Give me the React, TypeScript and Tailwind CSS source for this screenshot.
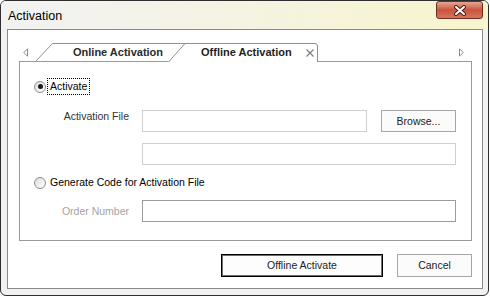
import React from "react";

const font = { fontFamily: '"Liberation Sans", Arial, sans-serif' };

function Radio({ checked }: { checked?: boolean }) {
  return (
    <div className="w-[12px] h-[12px] rounded-full border border-[#8e8f8f] bg-gradient-to-br from-[#dcdcdc] to-[#ffffff] flex items-center justify-center shrink-0">
      {checked && <div className="w-[5px] h-[5px] rounded-full bg-[#1a1a1a]" />}
    </div>
  );
}

function Field({ w, dark }: { w: string; dark?: boolean }) {
  return (
    <div
      className={`${w} h-[22px] bg-white border ${dark ? "border-[#9c9c9c]" : "border-[#cfcfcf]"}`}
    />
  );
}

export default function App() {
  return (
    <div className="w-[490px] h-[296px] bg-white" style={font}>
      <div className="w-[489px] h-[296px] border border-[#2e2e2e] rounded-[6px] bg-[#f1f1f1] flex flex-col overflow-hidden">
        {/* Title bar */}
        <div className="h-[28px] shrink-0 flex items-start justify-between bg-gradient-to-r from-[#f2f2f2] via-[#f5f3e2] to-[#f8f5cc]">
          <div className="pl-[7px] pt-[8px] text-[12.5px] leading-[15px] text-black">Activation</div>
          <div className="mr-[5px] w-[47px] h-[18px] rounded-[3px] border border-[#6b2f24] bg-gradient-to-b from-[#e7a595] via-[#c9533c] to-[#d8745a] flex items-center justify-center">
            <svg width="14" height="11" viewBox="0 0 14 11">
              <path d="M3 2 L11 9 M11 2 L3 9" stroke="#4a2018" strokeWidth="4" strokeLinecap="round" />
              <path d="M3 2 L11 9 M11 2 L3 9" stroke="#ffffff" strokeWidth="2" strokeLinecap="round" />
            </svg>
          </div>
        </div>

        {/* Client area */}
        <div className="ml-[6px] mr-[5px] h-[260px] bg-white border border-[#8a8a8a] pl-[11px] pt-[13px]">
          <div className="w-[453px]">
            {/* Tab strip */}
            <div className="flex h-[19px]">
              <div className="w-[16px] h-[19px] border-b border-[#9a9a9a] flex items-center pl-[4px]">
                <svg width="6" height="9" viewBox="0 0 6 9">
                  <path d="M4.5 0.8 L0.8 4.5 L4.5 8.2 Z" fill="none" stroke="#8a8a8a" strokeWidth="1" />
                </svg>
              </div>
              <div className="relative w-[150px] h-[19px] flex items-center pl-[38px]">
                <svg className="absolute inset-0" width="150" height="19" viewBox="0 0 150 19">
                  <path d="M0 19 L17.5 0.5 L150 0.5 L150 19 Z" fill="#ffffff" />
                  <path d="M0.5 18.5 L17.5 0.5 L150 0.5" fill="none" stroke="#8f8f8f" strokeWidth="1" />
                  <path d="M0 18.5 L150 18.5" stroke="#9a9a9a" strokeWidth="1" />
                </svg>
                <span className="relative text-[11px] font-bold text-[#2b2b2b] leading-[13px]">Online Activation</span>
              </div>
              <div className="relative -ml-[17px] w-[150px] h-[19px] flex items-center pl-[33px]">
                <svg className="absolute inset-0" width="150" height="19" viewBox="0 0 150 19">
                  <path d="M0 19 L17 0.5 L147 0.5 Q149.5 0.5 149.5 3 L149.5 19 Z" fill="#ffffff" />
                  <path d="M0.5 19 L17 0.5 L147 0.5 Q149.5 0.5 149.5 3 L149.5 19" fill="none" stroke="#8f8f8f" strokeWidth="1" />
                </svg>
                <span className="relative text-[11px] font-bold text-[#1e1e1e] leading-[13px]">Offline Activation</span>
                <svg className="relative ml-[14px]" width="8" height="8" viewBox="0 0 8 8">
                  <path d="M0.5 0.5 L7.5 7.5 M7.5 0.5 L0.5 7.5" stroke="#7a7a7a" strokeWidth="1.1" />
                </svg>
              </div>
              <div className="flex-1 h-[19px] border-b border-[#9a9a9a] flex items-center justify-end pr-[8px]">
                <svg width="6" height="9" viewBox="0 0 6 9">
                  <path d="M1.5 0.8 L5.2 4.5 L1.5 8.2 Z" fill="none" stroke="#8a8a8a" strokeWidth="1" />
                </svg>
              </div>
            </div>

            {/* Tab panel */}
            <div className="h-[179px] border-x border-b border-[#9a9a9a] flex flex-col text-[10.5px] leading-[13px]">
              <div className="mt-[16px] h-[17px] flex items-center pl-[14px]">
                <Radio checked />
                <div className="ml-[1px] h-[17px] border border-dotted border-black px-[2px] flex items-center text-black">
                  Activate
                </div>
              </div>
              <div className="mt-[15px] flex items-start">
                <div className="w-[109px] text-right pt-[0px] text-[#333]">Activation File</div>
                <div className="ml-[13px]">
                  <Field w="w-[225px]" />
                </div>
                <div className="ml-[14px] w-[75px] h-[22px] border border-[#a6a6a6] bg-[#fbfbfb] flex items-center justify-center text-[#222]">
                  Browse...
                </div>
              </div>
              <div className="mt-[11px] pl-[122px]">
                <Field w="w-[314px]" />
              </div>
              <div className="mt-[9px] h-[17px] flex items-center pl-[14px]">
                <Radio />
                <div className="ml-[1px] px-[3px] text-black">Generate Code for Activation File</div>
              </div>
              <div className="mt-[9px] flex items-center">
                <div className="w-[109px] text-right text-[#a3a3a3]">Order Number</div>
                <div className="ml-[13px]">
                  <Field w="w-[314px]" dark />
                </div>
              </div>
            </div>

            {/* Buttons */}
            <div className="mt-[13px] flex justify-end gap-[14px] text-[10.5px] leading-[13px]">
              <div className="w-[162px] h-[23px] border border-black shadow-[inset_0_0_0_1px_#6e6e6e] bg-[#fdfdfd] flex items-center justify-center text-[#222]">
                Offline Activate
              </div>
              <div className="w-[75px] h-[23px] border border-[#a6a6a6] bg-[#fbfbfb] flex items-center justify-center text-[#222]">
                Cancel
              </div>
            </div>
          </div>
        </div>
      </div>
    </div>
  );
}
